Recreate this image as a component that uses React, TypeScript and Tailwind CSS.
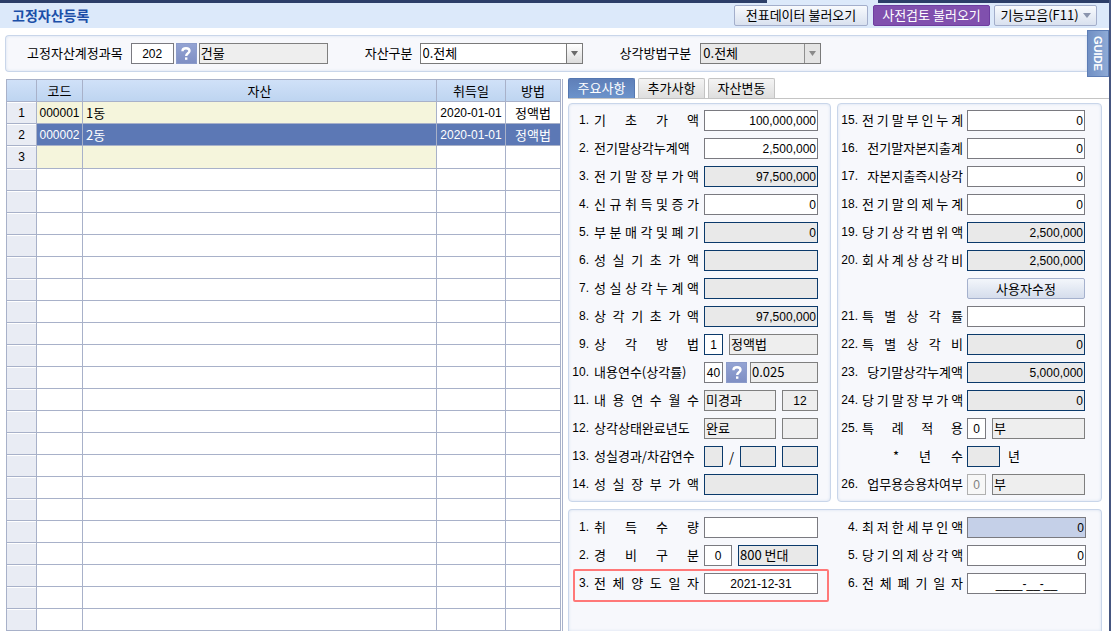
import type { ReactNode } from "react"
import clsx from "clsx"

type Tone = "edit" | "active" | "calc" | "info" | "off" | "tint"

const tones: Record<Tone, string> = {
  edit: "bg-white border-[#7a7a80]",
  active: "bg-white border-[#0b3a6b]",
  calc: "bg-[#e9e9e9] border-[#0b3a6b]",
  info: "bg-[#eeeeee] border-[#7f7f7f]",
  off: "bg-[#f7f7f7] border-[#b0b0b0] text-[#808080]",
  tint: "bg-[#c5d0e8] border-[#7a7a80]",
}

// digits are set a little smaller than the Hangul
const num = "font-['Liberation_Sans','Noto_Sans_CJK_KR',sans-serif] text-[12px]"

type FieldProps = {
  id?: string
  label?: string
  value?: string
  tone?: Tone
  align?: "left" | "center" | "right"
  className?: string
}

function Field({ id, label, value = "", tone = "edit", align = "right", className = "min-w-0 flex-1" }: FieldProps) {
  return (
    <input
      id={id}
      aria-label={label}
      defaultValue={value}
      readOnly={tone === "calc" || tone === "info"}
      disabled={tone === "off"}
      className={clsx(
        "h-[21px] border outline-none",
        tones[tone],
        align === "right" && ["px-px text-right", num],
        align === "center" && ["text-center", num],
        align === "left" && "px-px pb-0.5 text-left",
        className
      )}
    />
  )
}

function HelpButton({ label }: { label: string }) {
  return (
    <button
      type="button"
      aria-label={label}
      className="flex h-[21px] w-[21px] shrink-0 items-center justify-center border border-[#8b9bca] bg-linear-to-b from-[#93a3d3] to-[#7f8fc4]"
    >
      <svg viewBox="0 0 10 13" className="h-[13px] w-[10px]" fill="none" stroke="white" strokeWidth="2.4">
        <path d="M1.5 4.2C1.5 2.4 3 1.3 5 1.3s3.5 1 3.5 2.8c0 2.2-3.3 2.3-3.3 4.9" />
        <path d="M4 11.6h2.4" />
      </svg>
    </button>
  )
}

function Picker({ id, value, disabled, className }: { id: string; value: string; disabled?: boolean; className: string }) {
  return (
    <div className={clsx("relative h-[21px]", className)}>
      <select
        id={id}
        disabled={disabled}
        className={clsx(
          "h-full w-full appearance-none border border-[#7a7a7a] pb-0.5 pl-0.5 text-black opacity-100 outline-none",
          disabled ? "bg-[#e9e9e9]" : "bg-white"
        )}
      >
        <option>{value}</option>
      </select>
      <span
        className={clsx(
          "pointer-events-none absolute inset-y-px right-px flex w-4 items-center justify-center border-l",
          disabled ? "border-[#8f8f8f] bg-[#e4e4e4]" : "border-[#7a7a7a] bg-linear-to-b from-white to-[#dcdcdc]"
        )}
      >
        <svg viewBox="0 0 7 5" className="h-[5px] w-[7px]" fill={disabled ? "#8a8a8a" : "#6a6a6a"}>
          <path d="M0 0h7L3.5 5z" />
        </svg>
      </span>
    </div>
  )
}

type RowProps = { id: string; no: string; name: string; narrow?: boolean; children: ReactNode }

function Row({ id, no, name, narrow, children }: RowProps) {
  return (
    <div className="flex h-[21px] items-center">
      <label htmlFor={id} className="flex shrink-0 whitespace-nowrap pb-0.5">
        <span className={clsx("w-5 text-right", num)}>{no}</span>
        <span
          className={clsx(
            narrow ? "ml-1 w-[101px]" : "ml-[5px] w-[105px]",
            narrow && !name.includes(" ") ? "text-right" : "[text-align-last:justify]"
          )}
        >
          {name}
        </span>
      </label>
      <div className={clsx("flex min-w-0 flex-1 items-center", narrow ? "ml-1" : "ml-[5px]")}>{children}</div>
    </div>
  )
}

const panel = "border border-[#c9d6ea] bg-[#f7f8fc] shadow-[inset_0_0_3px_#d5e0f0]"

const blankRows = Array.from({ length: 21 }, (_, i) => i)

const assets = [
  { no: 1, code: "000001", name: "1동", date: "2020-01-01", method: "정액법", selected: false },
  { no: 2, code: "000002", name: "2동", date: "2020-01-01", method: "정액법", selected: true },
]

const noCell = "border border-[#a8b1c9] bg-[#e9ecf4] p-0 text-center shadow-[inset_0_1px_0_white]"
const cell = "border border-[#a8b1c9] p-0"

function AssetTable() {
  return (
    <div className="mr-[5px] min-w-0 flex-1 self-start border-r border-[#a8b1c9] pr-px">
      <table className="w-full table-fixed border-collapse">
        <colgroup>
          <col className="w-[30px]" />
          <col className="w-[46px]" />
          <col />
          <col className="w-[69px]" />
          <col className="w-[55px]" />
        </colgroup>
        <thead>
          <tr className="h-[22px] bg-linear-to-b from-[#d0e1f8] to-[#bdd4f0]">
            {["", "코드", "자산", "취득일", "방법"].map((title, i) => (
              <th key={i} className={clsx(cell, "font-normal")}>{title}</th>
            ))}
          </tr>
        </thead>
        <tbody>
          {assets.map((a) => (
            <tr key={a.no} className={clsx("h-[22px]", a.selected && "bg-[#5c78b5] text-white")}>
              <td className={clsx(noCell, num, "text-black")}>{a.no}</td>
              <td className={clsx(cell, num, "text-center", !a.selected && "bg-[#f5f5dc]")}>{a.code}</td>
              <td className={clsx(cell, "pl-[3px]", !a.selected && "bg-[#f5f5dc]")}>{a.name}</td>
              <td className={clsx(cell, num, "text-center")}>{a.date}</td>
              <td className={clsx(cell, "text-center")}>{a.method}</td>
            </tr>
          ))}
          <tr className="h-[23px]">
            <td className={clsx(noCell, num)}>3</td>
            <td className={clsx(cell, "bg-[#f5f5dc]")} />
            <td className={clsx(cell, "bg-[#f5f5dc]")} />
            <td className={cell} />
            <td className={cell} />
          </tr>
          {blankRows.map((r) => (
            <tr key={r} className="h-[22px]">
              <td className={noCell} />
              <td className={cell} />
              <td className={cell} />
              <td className={cell} />
              <td className={cell} />
            </tr>
          ))}
        </tbody>
      </table>
    </div>
  )
}

function Tabs() {
  const tab = "h-5 w-[67px] rounded-t-xs border border-b-0 pb-0.5"
  return (
    <div role="tablist" className="flex h-[21px] gap-[3px] border-b border-[#c4c4c4]">
      <button role="tab" aria-selected="true" className={clsx(tab, "border-[#5577b0] bg-linear-to-b from-[#5f7fb8] to-[#6c93cb] text-white")}>주요사항</button>
      <button role="tab" aria-selected="false" className={clsx(tab, "border-[#c4c4c4] bg-linear-to-b from-[#f4f4f4] to-[#dedede]")}>추가사항</button>
      <button role="tab" aria-selected="false" className={clsx(tab, "border-[#c4c4c4] bg-linear-to-b from-[#f4f4f4] to-[#dedede]")}>자산변동</button>
    </div>
  )
}

function BasePanel() {
  return (
    <section className={clsx(panel, "flex w-[263px] flex-col gap-[7px] rounded-sm py-1.5 pr-3")}>
      <Row id="b1" no="1." name="기 초 가 액"><Field id="b1" value="100,000,000" /></Row>
      <Row id="b2" no="2." name="전기말상각누계액"><Field id="b2" value="2,500,000" /></Row>
      <Row id="b3" no="3." name="전 기 말 장 부 가 액"><Field id="b3" value="97,500,000" tone="calc" /></Row>
      <Row id="b4" no="4." name="신 규 취 득 및 증 가"><Field id="b4" value="0" /></Row>
      <Row id="b5" no="5." name="부 분 매 각 및 폐 기"><Field id="b5" value="0" tone="calc" /></Row>
      <Row id="b6" no="6." name="성 실 기 초 가 액"><Field id="b6" tone="calc" /></Row>
      <Row id="b7" no="7." name="성 실 상 각 누 계 액"><Field id="b7" tone="calc" /></Row>
      <Row id="b8" no="8." name="상 각 기 초 가 액"><Field id="b8" value="97,500,000" tone="calc" /></Row>
      <Row id="b9" no="9." name="상 각 방 법">
        <Field id="b9" value="1" tone="active" align="center" className="w-[19px]" />
        <Field label="상각방법명" value="정액법" tone="info" align="left" className="ml-1.5 min-w-0 flex-1" />
      </Row>
      <Row id="b10" no="10." name="내용연수(상각률)">
        <Field id="b10" value="40" align="center" className="w-[19px]" />
        <span className="mx-[3px] flex"><HelpButton label="상각률 조회" /></span>
        <Field label="상각률" value="0.025" tone="info" align="left" />
      </Row>
      <Row id="b11" no="11." name="내 용 연 수 월 수">
        <Field id="b11" value="미경과" tone="info" align="left" />
        <Field label="월수" value="12" tone="info" align="center" className="ml-1.5 w-9" />
      </Row>
      <Row id="b12" no="12." name="상각상태완료년도">
        <Field id="b12" value="완료" tone="info" align="left" />
        <Field label="완료년도" tone="info" className="ml-1.5 w-9" />
      </Row>
      <Row id="b13" no="13." name="성실경과/차감연수">
        <Field id="b13" tone="calc" className="w-[19px]" />
        <span className="flex-1 text-center">/</span>
        <Field label="차감연수" tone="calc" className="w-9" />
        <Field label="연수" tone="calc" className="ml-1.5 w-9" />
      </Row>
      <Row id="b14" no="14." name="성 실 장 부 가 액"><Field id="b14" tone="calc" /></Row>
    </section>
  )
}

function DepreciationPanel() {
  return (
    <section className={clsx(panel, "flex min-w-0 flex-1 flex-col gap-[7px] rounded-sm py-1.5 pr-4")}>
      <Row narrow id="d15" no="15." name="전 기 말 부 인 누 계"><Field id="d15" value="0" /></Row>
      <Row narrow id="d16" no="16." name="전기말자본지출계"><Field id="d16" value="0" /></Row>
      <Row narrow id="d17" no="17." name="자본지출즉시상각"><Field id="d17" value="0" /></Row>
      <Row narrow id="d18" no="18." name="전 기 말 의 제 누 계"><Field id="d18" value="0" /></Row>
      <Row narrow id="d19" no="19." name="당 기 상 각 범 위 액"><Field id="d19" value="2,500,000" tone="calc" /></Row>
      <Row narrow id="d20" no="20." name="회 사 계 상 상 각 비"><Field id="d20" value="2,500,000" tone="calc" /></Row>
      <div className="flex h-[21px] justify-end">
        <button type="button" className="h-full w-[118px] rounded-xs border border-[#a5b1cd] bg-linear-to-b from-[#f3f6fb] to-[#d5ddec]">
          사용자수정
        </button>
      </div>
      <Row narrow id="d21" no="21." name="특 별 상 각 률"><Field id="d21" /></Row>
      <Row narrow id="d22" no="22." name="특 별 상 각 비"><Field id="d22" value="0" tone="calc" /></Row>
      <Row narrow id="d23" no="23." name="당기말상각누계액"><Field id="d23" value="5,000,000" tone="calc" /></Row>
      <Row narrow id="d24" no="24." name="당 기 말 장 부 가 액"><Field id="d24" value="0" tone="calc" /></Row>
      <Row narrow id="d25" no="25." name="특 례 적 용">
        <Field id="d25" value="0" align="center" className="w-[19px]" />
        <Field label="특례적용 여부" value="부" tone="info" align="left" className="ml-1.5 min-w-0 flex-1" />
      </Row>
      <div className="flex h-[21px] items-center">
        <label htmlFor="years" className="ml-[55px] w-[70px] pb-0.5 [text-align-last:justify]">* 년 수</label>
        <Field id="years" tone="calc" className="ml-1 w-[33px]" />
        <span className="ml-2 pb-0.5">년</span>
      </div>
      <Row narrow id="d26" no="26." name="업무용승용차여부">
        <Field id="d26" value="0" tone="off" align="center" className="w-[19px]" />
        <Field label="업무용승용차" value="부" tone="info" align="left" className="ml-1.5 min-w-0 flex-1" />
      </Row>
    </section>
  )
}

function DisposalPanel() {
  return (
    <section className={clsx(panel, "mt-[7px] flex flex-1 rounded-t-sm border-b-0 pr-[15px] pt-[7px]")}>
      <div className="flex w-[249px] flex-col gap-[7px]">
        <Row id="e1" no="1." name="취 득 수 량"><Field id="e1" /></Row>
        <Row id="e2" no="2." name="경 비 구 분">
          <Field id="e2" value="0" align="center" className="w-7" />
          <Field label="경비구분명" value="800 번대" tone="calc" align="left" className="ml-1.5 min-w-0 flex-1" />
        </Row>
        <div className="relative">
          <Row id="e3" no="3." name="전 체 양 도 일 자"><Field id="e3" value="2021-12-31" align="center" /></Row>
          <span className="pointer-events-none absolute -right-[11px] -bottom-2 -top-1 left-1 rounded-xs border-2 border-[#ff7878]" />
        </div>
      </div>
      <div className="ml-5 flex min-w-0 flex-1 flex-col gap-[7px]">
        <Row narrow id="e4" no="4." name="최 저 한 세 부 인 액"><Field id="e4" value="0" tone="tint" /></Row>
        <Row narrow id="e5" no="5." name="당 기 의 제 상 각 액"><Field id="e5" value="0" /></Row>
        <Row narrow id="e6" no="6." name="전 체 폐 기 일 자"><Field id="e6" value="____-__-__" align="center" /></Row>
      </div>
    </section>
  )
}

export default function App() {
  const headBtn = "flex h-[21px] items-center justify-center rounded-xs border pb-px"
  return (
    <div className="flex min-h-screen flex-col border-r-2 border-[#465680] bg-white font-['Noto_Sans_CJK_KR',sans-serif] text-[13px] leading-[18px] text-black">
      <div className="flex h-[3px] justify-end bg-[#2c3e68]">
        <div className="mr-[231px] w-[111px] bg-[#dce9fa]" />
      </div>
      <header className="flex h-[25px] items-center bg-[#dce9fa] pl-3 pr-3">
        <h1 className="flex-1 pb-0.5 text-[14px] font-bold text-[#1b4fa8]">고정자산등록</h1>
        <button type="button" className={clsx(headBtn, "w-[134px] border-[#a3aecb] bg-linear-to-b from-[#f8fafd] to-[#d9e1ef]")}>전표데이터 불러오기</button>
        <button type="button" className={clsx(headBtn, "ml-[5px] w-[117px] border-[#6e3da0] bg-[#8050ae] text-white")}>사전검토 불러오기</button>
        <button type="button" className={clsx(headBtn, "ml-1 w-[103px] gap-1 border-[#a3aecb] bg-linear-to-b from-[#f8fafd] to-[#d9e1ef]")}>
          기능모음(F11)
          <svg viewBox="0 0 8 5" className="h-[5px] w-2" fill="#8a94ad">
            <path d="M0 0h8L4 5z" />
          </svg>
        </button>
      </header>

      <div className="flex h-[51px] items-start pl-[5px]">
        <div className={clsx(panel, "mt-[7px] flex h-[37px] flex-1 items-center rounded-l-sm border-r-0 pl-[21px]")}>
          <label htmlFor="account" className="pb-0.5">고정자산계정과목</label>
          <Field id="account" value="202" align="center" className="ml-2 w-[43px]" />
          <span className="mx-0.5 flex"><HelpButton label="계정과목 조회" /></span>
          <Field label="계정과목명" value="건물" tone="info" align="left" className="w-[129px]" />
          <label htmlFor="kind" className="ml-[37px] pb-0.5">자산구분</label>
          <Picker id="kind" value="0.전체" className="ml-[7px] w-[163px]" />
          <label htmlFor="method" className="ml-[37px] pb-0.5">상각방법구분</label>
          <Picker id="method" value="0.전체" disabled className="ml-[9px] w-[121px]" />
        </div>
        <button
          type="button"
          className="mt-0.5 flex h-[47px] w-[22px] items-center justify-center border border-[#5d7db5] bg-linear-to-r from-[#7190c4] to-[#8eaad6] font-['Liberation_Sans',sans-serif] text-[11px] font-bold text-white [writing-mode:vertical-rl]"
        >
          GUIDE
        </button>
      </div>

      <main className="flex flex-1 pl-1.5">
        <AssetTable />
        <div className="-mt-px flex w-[541px] shrink-0 flex-col">
          <Tabs />
          <div className="mt-1 flex flex-1 flex-col pr-[7px]">
            <div className="flex gap-1.5">
              <BasePanel />
              <DepreciationPanel />
            </div>
            <DisposalPanel />
          </div>
        </div>
      </main>
    </div>
  )
}
